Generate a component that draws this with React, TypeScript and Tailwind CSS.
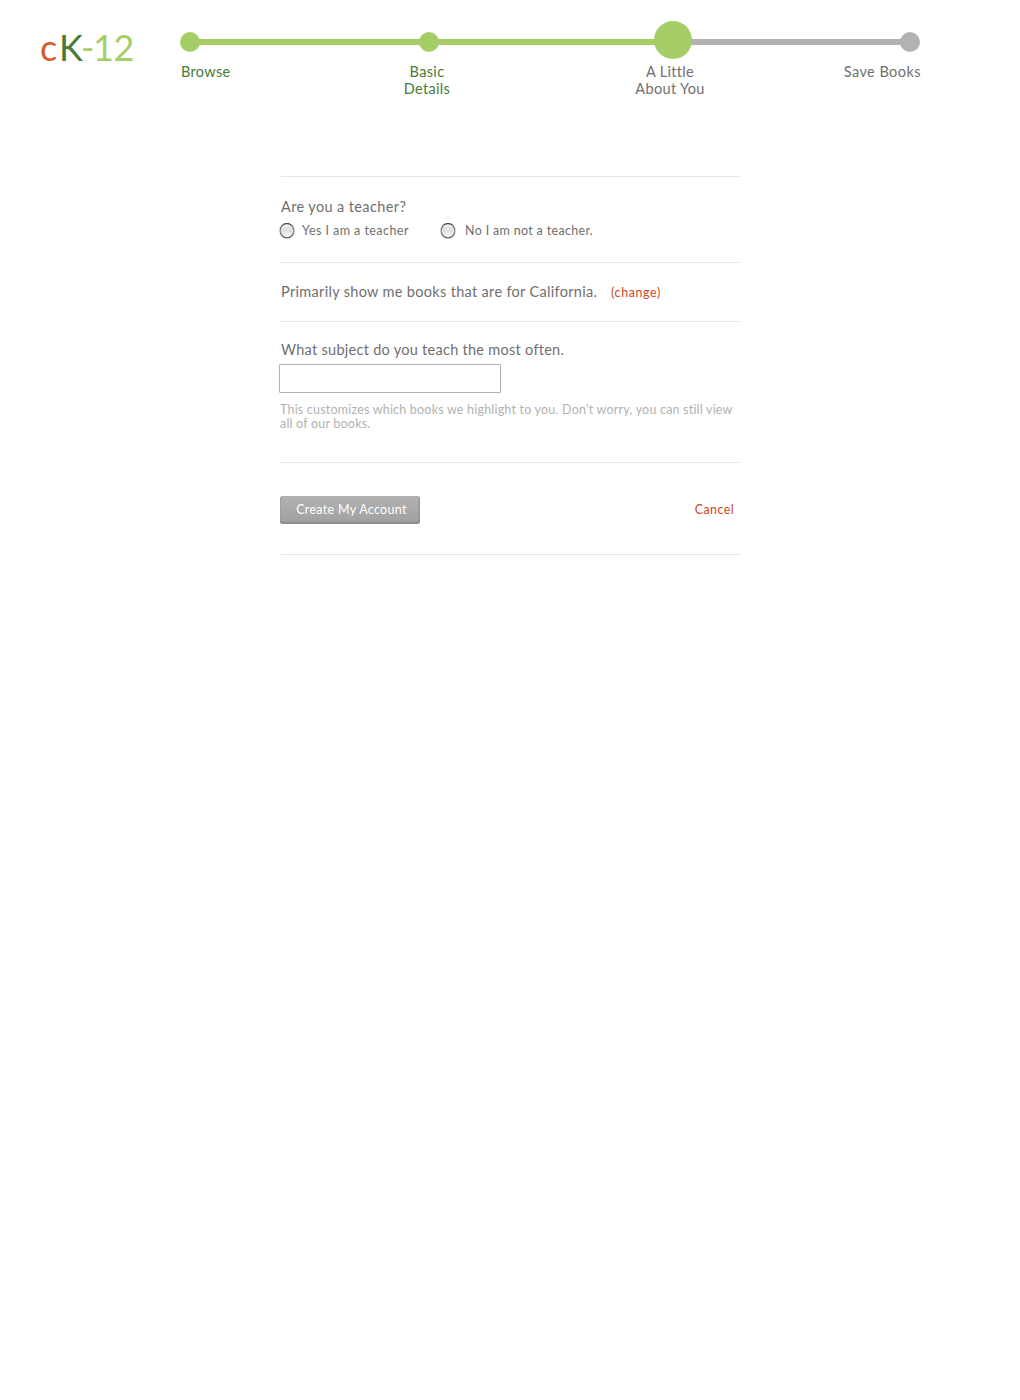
import type { ReactNode } from "react";

function Radio({ label, className, gap }: { label: string; className: string; gap: string }) {
  return (
    <label className={`flex h-4 items-center whitespace-nowrap text-[12.5px] leading-4 ${className}`}>
      <svg width="16" height="16" viewBox="0 0 16 16" className={`shrink-0 ${gap}`}>
        <defs>
          <linearGradient id="ring" x1="0" y1="0" x2="0" y2="1">
            <stop offset="0" stopColor="#4d4d4d" />
            <stop offset="0.5" stopColor="#8a8a8a" />
            <stop offset="1" stopColor="#5e5e5e" />
          </linearGradient>
          <linearGradient id="face" x1="0" y1="0" x2="0" y2="1">
            <stop offset="0" stopColor="#ffffff" />
            <stop offset="0.35" stopColor="#dedede" />
            <stop offset="0.55" stopColor="#e2e2e2" />
            <stop offset="1" stopColor="#ffffff" />
          </linearGradient>
        </defs>
        <ellipse cx="8" cy="7.7" rx="6.9" ry="7.2" fill="url(#face)" stroke="url(#ring)" strokeWidth="1.3" />
      </svg>
      <input type="radio" name="teacher" className="sr-only" />
      <span>{label}</span>
    </label>
  );
}

function Section({ className, children }: { className: string; children: ReactNode }) {
  return <section className={`border-b border-[#e5e5e5] ${className}`}>{children}</section>;
}

export default function App() {
  return (
    <div className="min-h-[1400px] w-[1020px] bg-white font-['Lato',sans-serif] text-[14.5px] leading-[17px] text-[#706f6f]">
      <header className="flex h-[176px] pl-10">
        <div className="mt-[27px] flex h-10 w-[140px] text-[36px] leading-10">
          <span className="w-[19px] text-[#d95b2b]">c</span>
          <span className="w-[22px] text-[#477b36]">K</span>
          <span className="w-[12px] text-[#a6ce67]">-</span>
          <span className="tracking-[-0.4px] text-[#a6ce67]">12</span>
        </div>
        <div className="w-[742px]">
          <div className="mt-[21px] flex h-[42px] w-[740px] items-center">
            <i className="size-5 rounded-full bg-[#a6ce67]" />
            <i className="-mx-px h-1.5 w-[221px] bg-[#a6ce67]" />
            <i className="size-5 rounded-full bg-[#a6ce67]" />
            <i className="-mx-px h-1.5 w-[217px] bg-[#a6ce67]" />
            <i className="mb-1 size-[38px] rounded-full bg-[#a6ce67]" />
            <i className="-mx-px h-1.5 w-[210px] bg-[#b2b2b2]" />
            <i className="size-5 rounded-full bg-[#b2b2b2]" />
          </div>
          <div className="flex pl-px text-center tracking-[0.33px]">
            <span className="w-[206px] text-left text-[#477b36]">Browse</span>
            <span className="w-20 text-[#477b36]">Basic<br />Details</span>
            <span className="ml-[153px] w-[100px]">A Little<br />About You</span>
            <span className="ml-auto mr-px tracking-[0.45px]">Save Books</span>
          </div>
        </div>
      </header>

      <main className="ml-[281px] w-[459px] border-t border-[#e5e5e5]">
        <Section className="h-[86px] pt-[21px]">
          <h2 className="tracking-[0.38px]">Are you a teacher?</h2>
          <div className="-ml-[2px] mt-[8px] flex">
            <Radio label="Yes I am a teacher" className="w-[161px] tracking-[0.45px]" gap="mr-[7px]" />
            <Radio label="No I am not a teacher." className="tracking-[0.33px]" gap="mr-[9px]" />
          </div>
        </Section>
        <Section className="flex h-[59px] pt-[20px]">
          <p className="w-[330px] whitespace-nowrap tracking-[0.32px]">Primarily show me books that are for California.</p>
          <a href="#" className="pt-px text-[12.5px] leading-[18px] tracking-[0.6px] text-[#d2491c]">(change)</a>
        </Section>
        <Section className="h-[141px] pt-[19px]">
          <h2 className="tracking-[0.28px]">What subject do you teach the most often.</h2>
          <input className="-ml-[2px] mt-[6px] block h-[29px] w-[222px] rounded-[1px] border border-[#b2b2b2] bg-white px-2 outline-none" />
          <p className="-ml-px mt-[10px] whitespace-nowrap text-[12.5px] leading-[14px] tracking-[0.2px] text-[#b2b2b2]">
            This customizes which books we highlight to you. Don’t worry, you can still view<br />all of our books.
          </p>
        </Section>
        <Section className="-ml-px flex h-[92px] justify-between border-b-0 pr-[6px] pt-[33px] text-[12.5px]">
          <button className="h-7 w-[140px] rounded-[3px] bg-linear-to-b from-[#b2b2b2] to-[#a0a0a0] pb-px pl-[3px] leading-[17px] tracking-[0.3px] text-white shadow-[inset_-1px_-2px_2px_#8c8c8c,inset_1px_0_1px_#a0a0a0]">
            Create My Account
          </button>
          <a href="#" className="leading-7 tracking-[0.38px] text-[#d2491c]">Cancel</a>
        </Section>
        <hr className="-mt-px border-[#e5e5e5]" />
      </main>
    </div>
  );
}
